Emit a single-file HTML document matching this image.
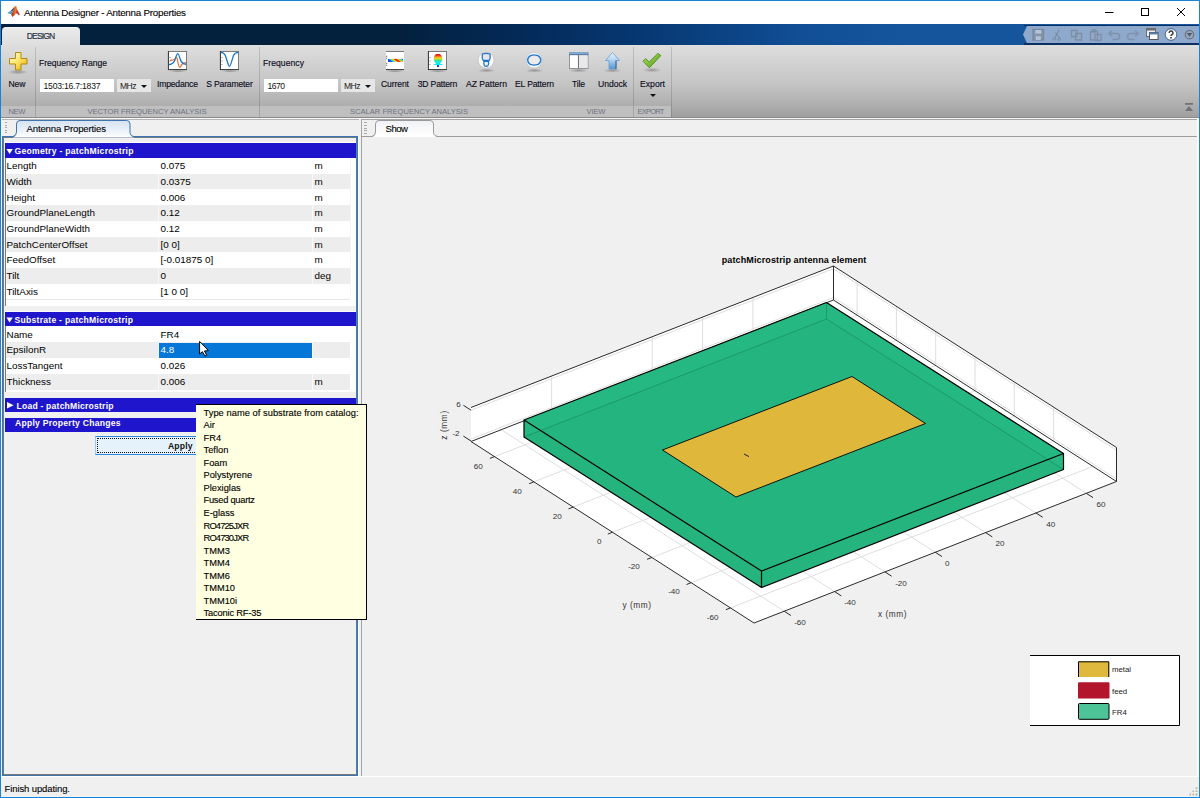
<!DOCTYPE html>
<html><head><meta charset="utf-8"><title>Antenna Designer - Antenna Properties</title>
<style>
html,body{margin:0;padding:0;}
body{width:1200px;height:798px;overflow:hidden;background:#f0f0f0;font-family:"Liberation Sans",sans-serif;position:relative;}
.a{position:absolute;box-sizing:border-box;}
.t{position:absolute;white-space:pre;line-height:14px;height:14px;font-family:"Liberation Sans",sans-serif;color:#000;z-index:5;}
#win{left:0;top:0;width:1200px;height:798px;border:1px solid #1883d7;z-index:40;pointer-events:none;}
#title{left:1px;top:1px;width:1198px;height:23px;background:#fff;}
#tabs{left:1px;top:24px;width:1198px;height:21px;background:linear-gradient(90deg,#03203c 0,#03203c 390px,#042a58 520px,#06356e 620px,#0b4384 720px,#114e94 800px,#15559c 900px,#16569c 1198px);}
#dtab{left:2px;top:27px;width:78px;height:19px;border-radius:4px 4px 0 0;background:linear-gradient(#ebebeb,#dddddd);border-top:1px solid #f6f6f6;}
#strip{left:1px;top:45px;width:1198px;height:72px;background:linear-gradient(#dedede 0,#d2d2d2 25%,#c4c4c4 55%,#adadad 85%,#9f9f9f 100%);}
#band{left:1px;top:105.500px;width:670px;height:11.500px;background:#bfbfbf;}
#stripb{left:1px;top:117px;width:1198px;height:1px;background:#8a8a8a;}
.sep{width:1px;top:47px;height:70px;background:rgba(0,0,0,.14);}
.inp{background:#fff;height:12.7px;top:79.3px;}
.cmb{background:#e6e6e6;height:12.7px;top:79.3px;}
.arr{width:0;height:0;border-left:3px solid transparent;border-right:3px solid transparent;border-top:3.5px solid #111;}
#qat{left:1023px;top:26px;width:176px;height:17px;background:#8ea9cb;clip-path:polygon(4px 0,100% 0,100% 100%,4px 100%,0 50%);}
#docL,#docR{top:118px;height:19px;background:#f0f0f0;}
#lp{left:2px;top:136px;width:356px;height:640px;border:1px solid #3f74ad;background:#f0f0f0;}
#lpi{left:3px;top:137px;width:354px;height:638px;border:1px solid #6f7b88;border-right-color:#587ba6;border-bottom-color:#787878;}
.hdr{left:5px;width:351px;background:#1f15cd;}
.row{left:6px;width:344px;height:15.7px;}
.g{background:#ededed;}
.w{background:#fff;}
#tip{left:196px;top:404px;width:171px;height:216px;background:#ffffe1;border:1px solid #000;border-left:0;z-index:30;}
</style></head>
<body>
<div class="a" id="title"></div>
<div class="a" id="tabs"></div>
<div class="a" id="strip"></div>
<div class="a" id="band"></div>
<div class="a" id="stripb"></div>
<div class="a" id="dtab"></div>
<div class="a" id="qat"></div>
<div class="a" style="left:1024px;top:24.5px;width:175px;height:1.5px;background:#0b2e63"></div><div class="a" style="left:1024px;top:43px;width:175px;height:1.6px;background:#0b2e63"></div>
<!-- separators -->
<div class="a sep" style="left:35px"></div><div class="a sep" style="left:259px"></div><div class="a sep" style="left:633px"></div><div class="a sep" style="left:671px"></div>
<!-- inputs -->
<div class="a inp" style="left:40px;width:74px"></div><div class="a cmb" style="left:117px;width:34px"></div><div class="a arr" style="left:141px;top:84.5px"></div>
<div class="a inp" style="left:264px;width:74px"></div><div class="a cmb" style="left:341px;width:34px"></div><div class="a arr" style="left:365px;top:84.5px"></div>
<div class="a arr" style="left:649.5px;top:94px"></div>
<!-- window controls + chrome icons -->
<svg class="a" style="left:0;top:0;z-index:6" width="1200" height="140" viewBox="0 0 1200 140">
 <defs>
  <linearGradient id="gy" x1="0" y1="0" x2="1" y2="1"><stop offset="0" stop-color="#fffbe0"/><stop offset=".45" stop-color="#ffe770"/><stop offset="1" stop-color="#e8a800"/></linearGradient>
  <linearGradient id="rb" x1="0" x2="1" y1=".3" y2="0"><stop offset="0" stop-color="#0a3cff"/><stop offset=".1" stop-color="#0a5cff"/><stop offset=".17" stop-color="#1fe0f0"/><stop offset=".27" stop-color="#8be03a"/><stop offset=".36" stop-color="#ffd21e"/><stop offset=".45" stop-color="#f0200a"/><stop offset=".56" stop-color="#e8200a"/><stop offset=".66" stop-color="#ffc81e"/><stop offset=".75" stop-color="#8be03a"/><stop offset=".84" stop-color="#1fe0f0"/><stop offset=".91" stop-color="#0a5cff"/><stop offset="1" stop-color="#0a3cff"/></linearGradient>
  <linearGradient id="rv" x1="0" y1="0" x2="0" y2="1"><stop offset="0" stop-color="#e01008"/><stop offset=".1" stop-color="#f03010"/><stop offset=".24" stop-color="#ffa01e"/><stop offset=".36" stop-color="#d8e030"/><stop offset=".48" stop-color="#4ee070"/><stop offset=".6" stop-color="#10f0e8"/><stop offset=".82" stop-color="#10e8f8"/><stop offset=".86" stop-color="#1050ff"/><stop offset="1" stop-color="#0a30ff"/></linearGradient>
  <linearGradient id="ub" x1="0" y1="0" x2="0" y2="1"><stop offset="0" stop-color="#eef6fd"/><stop offset=".45" stop-color="#b4d4ef"/><stop offset="1" stop-color="#5395d2"/></linearGradient>
  <linearGradient id="gr" x1="0" y1="0" x2="1" y2="1"><stop offset="0" stop-color="#b5e45a"/><stop offset="1" stop-color="#4e9a1a"/></linearGradient>
  <linearGradient id="ml" x1="0" y1="0" x2="1" y2="0"><stop offset="0" stop-color="#2a5e9a"/><stop offset=".45" stop-color="#5a4a6a"/><stop offset=".6" stop-color="#d8481e"/><stop offset="1" stop-color="#f0a040"/></linearGradient>
  <linearGradient id="ml2" x1="0" y1="0" x2="1" y2="0"><stop offset="0" stop-color="#9a2418"/><stop offset=".55" stop-color="#e2641e"/><stop offset="1" stop-color="#f5a030"/></linearGradient><radialGradient id="sh"><stop offset="0" stop-color="#000" stop-opacity=".28"/><stop offset="1" stop-color="#000" stop-opacity="0"/></radialGradient>
 </defs>
 <!-- matlab logo -->
 <path d="M7.3 12.9L10.8 10.8L12.9 11.6L11.2 14.3L9 13.7Z" fill="#4f9bd8"/><path d="M10.8 10.800L14.800 6.300L13.600 10L12.900 11.600Z" fill="#3f4f82"/><path d="M11.200 14.300L12.900 11.600L14.800 6.200Q15.800 5.500 16.600 6.400L17.300 10.600L14.600 15.300L12.300 17.100Z" fill="url(#ml2)"/><path d="M16.900 9L19.900 14.800L18.700 15.300L16.900 13.300L15.500 14.100Z" fill="#c23a2c"/>
 <!-- min/max/close -->
 <path d="M1105 12.5H1113.5" stroke="#000" stroke-width="1"/>
 <rect x="1141.5" y="8.5" width="7" height="7" fill="none" stroke="#000"/>
 <path d="M1177 8L1185 16M1185 8L1177 16" stroke="#000" stroke-width="1"/>
 <!-- quick access icons (muted) -->
 <g fill="none" stroke="#7d8fa8" stroke-width="1.3">
  <rect x="1033" y="29.5" width="10.5" height="10.5" fill="#8494a9" stroke="#7787a0"/><rect x="1035.3" y="30" width="6" height="3.600" fill="#b4c3d8" stroke="none"/><rect x="1035.800" y="36.200" width="5" height="3.800" fill="#aebfd6" stroke="none"/>
  <path d="M1059.3 29.5L1055 37.5M1055.3 32.5L1059.5 37.8M1054.3 37.600a1.300 1.300 0 1 0 .1 0M1059.200 38a1.200 1.200 0 1 0 .1 0" stroke="#74869f" stroke-width="1"/>
  <path d="M1071.5 30.5h5.5v6h-5.5zM1075.5 33.5h6v6.5h-6z" fill="#93a9c8"/>
  <path d="M1090.5 31.5h7v8.500h-7zM1092.500 30h3v2h-3zM1095 34.500h6v6h-6z" fill="#93a9c8"/>
  <path d="M1109 33.500h7.500a3 3 0 0 1 0 6h-4M1111.800 30.800l-3 2.700l3 2.700" stroke="#8093ad" stroke-width="1.6"/>
  <path d="M1138 33.500h-7.500a3 3 0 0 0 0 6h4M1135.200 30.800l3 2.700l-3 2.700" stroke="#8093ad" stroke-width="1.6"/>
 </g>
 <rect x="1146.500" y="28.500" width="9" height="8" fill="#e8edf3" stroke="#6d6d6d"/><rect x="1146.500" y="28.500" width="9" height="2" fill="#6d6d6d"/>
 <rect x="1149.500" y="32.500" width="8.500" height="7" fill="#fff" stroke="#555"/><rect x="1149.500" y="32.500" width="8.500" height="2" fill="#5b83b5"/>
 <circle cx="1171" cy="34.500" r="5.800" fill="#fbfcfd" stroke="#41618d" stroke-width="1"/>
 <path d="M1169.200 33a1.900 1.900 0 1 1 2.600 1.700q-.8.400-.8 1.400" fill="none" stroke="#3c3c3c" stroke-width="1.500"/><rect x="1170.200" y="37" width="1.600" height="1.500" fill="#3c3c3c"/>
 <circle cx="1189.500" cy="34.700" r="4.200" fill="#93a6c0" stroke="#6a6e74" stroke-width="1.100"/><path d="M1186.800 33h5.400l-2.700 3.800z" fill="#55585e"/>
 <!-- collapse -->
 <path d="M1185 103h8v1.800h-8zM1189 106l4 5h-8z" fill="#6f7376"/>
 <!-- NEW plus -->
 <ellipse cx="18" cy="72" rx="10" ry="2.600" fill="url(#sh)"/>
 <path d="M15.500 52.500h5.500v6h6v5.500h-6v6h-5.500v-6h-6v-5.500h6z" fill="url(#gy)" stroke="#b38a12" stroke-width="1" stroke-linejoin="round"/>
 <ellipse cx="178" cy="71.2" rx="9" ry="1.5" fill="url(#sh)"/><ellipse cx="230" cy="71.2" rx="9" ry="1.5" fill="url(#sh)"/><ellipse cx="395" cy="71.2" rx="9" ry="1.5" fill="url(#sh)"/><ellipse cx="438" cy="71.2" rx="9" ry="1.5" fill="url(#sh)"/>
 <!-- Impedance -->
 <rect x="168.500" y="51.500" width="18" height="18" fill="#fff" stroke="#707070" stroke-width=".9"/><path d="M168 69.600h19M168.400 51v19" stroke="#3a3a3a" stroke-width="1"/>
 <path d="M169.500 57.500h1M169.500 61h1M169.500 64.500h1" stroke="#666" stroke-width=".8"/>
 <path d="M170 60.400C172.500 60.400 174.500 59.800 175.600 58.200C176.600 57 177 57.500 177.400 59.500C178.200 64 178.800 67.400 179.800 67.400C180.800 67.400 181 65 182.300 64C183.500 63 185 62.700 186.300 62.600" fill="none" stroke="#e2632b" stroke-width="1.100"/>
 <path d="M169 64.600C172 64.300 174 63 175.300 59C176.300 55.500 177 53.600 177.700 53.600C178.600 53.600 179.300 56 180.300 59.500C181.300 62.800 183 64 186.300 64.400" fill="none" stroke="#1b78c8" stroke-width="1.300"/>
 <!-- S parameter -->
 <rect x="220.500" y="51.500" width="18" height="18" fill="#fff" stroke="#707070" stroke-width=".9"/><path d="M220 69.600h19M220.400 51v19" stroke="#3a3a3a" stroke-width="1"/>
 <path d="M221.500 57.500h1M221.500 61h1M221.500 64.500h1" stroke="#666" stroke-width=".8"/>
 <path d="M220.800 52.400C223 52.500 224.300 53.300 225.300 55.500C227 59.500 228.300 66.400 229.500 66.400C230.700 66.400 232 59.500 233.500 55.500C234.500 53.300 236 52.500 238.500 52.400" fill="none" stroke="#1b78c8" stroke-width="1.300"/>
 <!-- Current -->
 <rect x="386" y="51" width="18" height="19" fill="#fff"/><path d="M386 51.500h18" stroke="#7a7a7a" stroke-width="1"/><path d="M386 69.600h18" stroke="#333" stroke-width="1"/>
 <path d="M386 56.300h1.200M386 58.300h1.200M386 63.300h1.200M386 65.300h1.200" stroke="#444" stroke-width=".8"/>
 <rect x="388" y="58.900" width="15" height="3" fill="url(#rb)"/>
 <!-- 3D pattern -->
 <rect x="428.500" y="51.500" width="18" height="18" fill="#fff" stroke="#707070" stroke-width=".9"/><path d="M428 69.600h19M428.400 51v19" stroke="#3a3a3a" stroke-width="1"/>
 <path d="M429.500 57.500h1M429.500 61h1M429.500 64.500h1" stroke="#666" stroke-width=".8"/>
 <path d="M436 54h4q2.200 1.400 2.200 4.800q0 3-2 4.800v.4h2v1.100h-3.200v1.900h-2v-1.900h-3.200v-1.100h2v-.4q-2-1.800-2-4.800q0-3.400 2.200-4.800z" fill="url(#rv)"/>
 <!-- AZ -->
 <ellipse cx="486.500" cy="70.500" rx="9" ry="2.200" fill="url(#sh)"/>
 <circle cx="486.100" cy="60.200" r="7.900" fill="#fefefe" stroke="#bcbcbc" stroke-width=".7"/>
 <path d="M478.3 60.2h15.6M486.1 52.400v15.600" stroke="#ece6e6" stroke-width=".7"/>
 <path d="M482.400 54q3.800-1.200 7.600 0q.8 4-.8 6.500h-6q-1.600-2.500-.8-6.500z" fill="#e6e6e6" stroke="#1f76cc" stroke-width="1.300" stroke-linejoin="round"/><path d="M484 61.400h4.400q.6 2.800-.5 4.400q-1.700.9-3.400 0q-1.100-1.600-.5-4.400z" fill="#f2f2f2" stroke="#1f76cc" stroke-width="1.300" stroke-linejoin="round"/>
 <!-- EL -->
 <ellipse cx="534.500" cy="70.500" rx="9" ry="2.200" fill="url(#sh)"/>
 <circle cx="534.100" cy="60.200" r="7.900" fill="#fefefe" stroke="#bcbcbc" stroke-width=".7"/>
 <path d="M526.3 60.2h15.6M534.1 52.400v15.600" stroke="#ece6e6" stroke-width=".7"/>
 <path d="M527.600 60q.4-3.400 3.600-4.600q3-1 6 0q3.200 1.200 3.600 4.600q-.2 2.800-2.600 4.400q-4 1.400-8 0q-2.400-1.600-2.600-4.400z" fill="#ececec" stroke="#1f76cc" stroke-width="1.400"/>
 <!-- Tile -->
 <ellipse cx="578.500" cy="70.500" rx="10" ry="2" fill="url(#sh)"/>
 <rect x="569.500" y="52.500" width="18.500" height="16" fill="#f4f4f4" stroke="#8a8d92" stroke-width=".9"/>
 <rect x="569.200" y="52.200" width="19" height="2.600" fill="#7fa9d3"/><path d="M569.200 54.800h19" stroke="#2f4f78" stroke-width=".8"/>
 <path d="M578.500 55.200v13.300" stroke="#6d7278" stroke-width="1.300"/>
 <rect x="570" y="55.500" width="7.800" height="12.500" fill="#fdfdfd"/><rect x="579.200" y="55.500" width="8.300" height="12.500" fill="#e9e9e9"/>
 <!-- Undock -->
 <ellipse cx="612.500" cy="70.500" rx="9" ry="2.200" fill="url(#sh)"/>
 <path d="M612.500 52.500l7 8h-3.500v8.500h-7v-8.500h-3.500z" fill="url(#ub)" stroke="#6a9cd0" stroke-width=".8" stroke-linejoin="round"/>
 <path d="M616 60.500v8.500" stroke="#2d5f95" stroke-width="1"/>
 <!-- Export -->
 <ellipse cx="652" cy="70" rx="9.500" ry="2.400" fill="url(#sh)"/>
 <path d="M643 61.200l2.600-2.600l3.600 3.400l8.800-8.600l2.800 2.200l-11.400 12.200z" fill="url(#gr)" stroke="#4a8f1c" stroke-width=".9" stroke-linejoin="round"/>
</svg>
<!-- doc tab bars -->
<div class="a" style="left:2px;top:119px;width:357px;height:1px;background:#b5b5b5"></div>
<div class="a" style="left:361px;top:119px;width:836px;height:1px;background:#a5a5a5"></div>
<div class="a" style="left:361px;top:119px;width:1px;height:658px;background:#a5a5a5"></div>
<div class="a" style="left:361px;top:136px;width:836px;height:1px;background:#9c9c9c"></div>
<div class="a" style="left:1197px;top:118px;width:2px;height:659px;background:#fff"></div>
<div class="a" style="left:1px;top:118px;width:1198px;height:1px;background:#f7f7f7"></div>
<!-- grips -->
<div class="a" style="left:5px;top:122px;width:2px;height:12px;background:repeating-linear-gradient(#a8a8a8 0 1px,transparent 1px 2.600px)"></div>
<div class="a" style="left:364px;top:122px;width:3px;height:12px;background:repeating-linear-gradient(#a8a8a8 0 1px,transparent 1px 2.800px)"></div>
<!-- left panel -->
<div class="a" id="lp"></div><div class="a" id="lpi"></div>
<div class="a" style="left:358px;top:137px;width:1px;height:639px;background:#fbfbfb"></div><div class="a" style="left:5px;top:142px;width:351px;height:1px;background:#fdfdf8"></div>
<!-- Antenna Properties tab -->
<svg class="a" style="left:0;top:110px;z-index:3" width="460" height="30" viewBox="0 110 460 30"><defs><linearGradient id="tb" x1="0" y1="0" x2="0" y2="1"><stop offset="0" stop-color="#d6e3f1"/><stop offset=".55" stop-color="#e9f0f8"/><stop offset="1" stop-color="#fff"/></linearGradient><linearGradient id="tg" x1="0" y1="0" x2="0" y2="1"><stop offset="0" stop-color="#f0f1f5"/><stop offset=".55" stop-color="#fafafb"/><stop offset="1" stop-color="#fff"/></linearGradient></defs>
<path d="M12.500 137.600q4-1.100 4-5.600v-8q0-3.500 3.500-3.500h106.500q3.500 0 3.500 3.500v8q0 4.500 4.500 5.600z" fill="url(#tb)"/><path d="M12.500 136.600q4-.5 4-4.600v-8q0-3.500 3.500-3.500h106.500q3.500 0 3.500 3.500v8q0 4.100 4.500 4.600" fill="none" stroke="#3f74ad" stroke-width="1"/>
<path d="M371.500 137q4-.5 4-5v-8q0-3.500 3.500-3.500h51q3.500 0 3.500 3.500v8q0 4.500 4.500 5z" fill="url(#tg)"/><path d="M371.500 136.500q4-.5 4-4.500v-8q0-3.500 3.500-3.500h51q3.500 0 3.500 3.500v8q0 4 4.500 4.500" fill="none" stroke="#9a9a9a" stroke-width="1"/></svg>
<!-- Show tab -->

<!-- geometry block -->
<div class="a w" style="left:5px;top:143px;width:351px;height:163px;border-left:1px solid #7a7a7a"></div>
<div class="a hdr" style="top:143px;height:14.700px"></div>
<div class="a row g" style="top:173.700px"></div><div class="a row g" style="top:205.100px"></div><div class="a row g" style="top:236.500px"></div><div class="a row g" style="top:267.900px"></div>
<div class="a" style="left:6px;top:299px;width:344px;height:1px;background:#e6e6e6"></div>
<div class="a" style="left:158px;top:158px;width:1px;height:141px;background:rgba(255,255,255,.6)"></div>
<div class="a" style="left:312px;top:158px;width:1px;height:141px;background:rgba(255,255,255,.7)"></div>
<div class="a" style="left:350px;top:158px;width:1px;height:141px;background:#f4f4f4"></div>
<!-- substrate block -->
<div class="a" style="left:5px;top:311px;width:351px;height:1px;background:#fafafa"></div>
<div class="a w" style="left:5px;top:326px;width:351px;height:66px;border-left:1px solid #7a7a7a"></div>
<div class="a hdr" style="top:312px;height:14.300px"></div>
<div class="a row g" style="top:342.200px"></div><div class="a row g" style="top:373.600px;height:16px"></div>
<div class="a" style="left:158px;top:326.500px;width:1px;height:63px;background:rgba(255,255,255,.6)"></div>
<div class="a" style="left:312px;top:326.500px;width:1px;height:63px;background:rgba(255,255,255,.7)"></div>
<div class="a" style="left:158.500px;top:342.800px;width:153.500px;height:15.100px;background:#0477d8"></div>
<!-- load / apply -->
<div class="a hdr" style="top:398px;height:14px"></div>
<div class="a hdr" style="top:418px;height:14px"></div>
<div class="a" style="left:95px;top:436px;width:170px;height:19px;background:#e5f1fb;border:1px solid #2a8ae0;border-left-color:#9cc8f0"></div>
<div class="a" style="left:97px;top:438px;width:166px;height:15px;border:1px dotted #111"></div>
<!-- header triangles + cursor -->
<svg class="a" style="left:0;top:0;z-index:32" width="400" height="460" viewBox="0 0 400 460">
 <path d="M6.400 149h6.400l-3.200 5z" fill="#fff"/><path d="M6.400 317.500h6.400l-3.200 5z" fill="#fff"/><path d="M7 402l6.600 3.200l-6.600 3.200z" fill="#fff"/>
 <path d="M199.6 341.4V354L202.4 351.7L204.9 356L206.7 355.2L204.5 351L208.5 350.6Z" fill="#fff" stroke="#000" stroke-width="1" stroke-linejoin="round"/>
</svg>
<div class="a" id="tip"></div>
<!-- status bar -->
<div class="a" style="left:1px;top:776px;width:1196px;height:1px;background:#fff"></div>
<svg class="a" style="left:1188px;top:785px;z-index:6" width="11" height="12"><g fill="#b9b4a4"><rect x="7.500" y="2.500" width="2" height="1.500"/><rect x="4.500" y="5.500" width="1.500" height="1.500"/><rect x="7.500" y="5.500" width="2" height="1.500"/><rect x="1.500" y="8.500" width="1.500" height="2"/><rect x="4.500" y="8.500" width="1.500" height="2"/><rect x="7.500" y="8.500" width="2" height="2"/></g></svg>
<!-- plot -->
<svg class="a" style="left:0;top:0;z-index:4" width="1200" height="798" viewBox="0 0 1200 798" shape-rendering="geometricPrecision">
<polygon points="754.0,623.0 1116.5,481.5 833.5,300.0 471.0,441.5" fill="#fff"/>
<polygon points="471.0,441.5 833.5,300.0 833.5,266.0 471.0,407.5" fill="#fff"/>
<polygon points="833.5,300.0 1116.5,481.5 1116.5,447.5 833.5,266.0" fill="#fff"/>
<path d="M784.2 611.2L501.2 429.7M730.4 607.9L1092.9 466.4M834.6 591.6L551.6 410.1M691.1 582.7L1053.6 441.2M551.6 410.1L551.6 376.1M1053.6 441.2L1053.6 407.2M884.9 571.9L601.9 390.4M651.8 557.5L1014.3 416.0M1014.3 416.0L1014.3 382.0M935.2 552.2L652.2 370.8M612.5 532.2L975.0 390.8M652.2 370.8L652.2 336.8M975.0 390.8L975.0 356.8M985.6 532.6L702.6 351.1M573.2 507.0L935.7 365.5M702.6 351.1L702.6 317.1M935.7 365.5L935.7 331.5M1035.9 512.9L752.9 331.4M533.9 481.8L896.4 340.3M752.9 331.4L752.9 297.4M896.4 340.3L896.4 306.3M1086.3 493.3L803.3 311.8M494.6 456.6L857.1 315.1M857.1 315.1L857.1 281.1M471.0 439.0L833.5 297.5L1116.5 479.0M471.0 410.2L833.5 268.7L1116.5 450.2" stroke="#dedede" stroke-width="1" fill="none"/>
<path d="M471.0 407.5L833.5 266.0M833.5 266.0L1116.5 447.5M833.5 266.0L833.5 300.0M1116.5 447.5L1116.5 481.5M471.0 441.5L833.5 300.0M833.5 300.0L1116.5 481.5M471.0 441.5L754.0 623.0M754.0 623.0L1116.5 481.5M784.2 611.2L790.9 615.5M730.4 607.9L725.8 609.7M834.6 591.6L841.3 595.9M691.1 582.7L686.5 584.5M884.9 571.9L891.6 576.2M651.8 557.5L647.1 559.3M935.2 552.2L942.0 556.6M612.5 532.2L607.8 534.1M985.6 532.6L992.3 536.9M573.2 507.0L568.5 508.9M1035.9 512.9L1042.7 517.3M533.9 481.8L529.2 483.7M1086.3 493.3L1093.0 497.6M494.6 456.6L489.9 458.4M471.0 441.0L463.4 436.1M471.0 410.2L463.4 405.3" stroke="#2a2a2a" stroke-width="1" fill="none"/>
<polygon points="524.0,420.0 826.5,302.5 1063.5,453.5 1063.5,469.5 761.5,587.5 524.0,437.0" fill="#25b37e"/>
<polygon points="524.0,420.0 826.5,302.5 1063.5,453.5 761.5,571.0" fill="#24b47f"/>
<polygon points="524.0,420.0 826.5,302.5 1063.5,453.5 1063.5,469.5 826.5,319.0 524.0,437.0" fill="#25b882"/>
<path d="M524 437L826.5 319L1063.5 469.5M826.5 302.5L826.5 319" stroke="#1c9568" stroke-width="0.9" fill="none"/>
<path d="M524 420L826.5 302.5L1063.5 453.5L761.5 571ZM524 420L524 437L761.5 587.5L1063.5 469.5L1063.5 453.5M761.5 571L761.5 587.5" stroke="#000" stroke-width="1.2" fill="none" stroke-linejoin="round"/>
<polygon points="662.5,450.0 852.0,376.5 925.5,423.5 736.0,497.0" fill="#dfb83b" stroke="#000" stroke-width="0.9" stroke-linejoin="round"/>
<path d="M744 454L749 456.6" stroke="#222" stroke-width="1"/>
<rect x="1030" y="655" width="150" height="71" fill="#fff"/><path d="M1030 655.5H1179.5V725.5H1030" stroke="#000" fill="none"/>
<rect x="1078" y="661.5" width="31" height="15.5" fill="#dfb83e"/><path d="M1078.5 677V661.8H1108.8V677" stroke="#000" fill="none"/>
<rect x="1078" y="682.2" width="31.5" height="16.4" rx="1.2" fill="#b3152d"/>
<rect x="1078.5" y="703.5" width="30.5" height="15.8" rx="1" fill="#4cc497" stroke="#000"/>
</svg>
<span class="t" style="left:24.00px;top:5.50px;font-size:9.8px;letter-spacing:-0.235px;-webkit-text-stroke:.1px #000;">Antenna Designer - Antenna Properties</span>
<span class="t" style="left:26.75px;top:28.80px;font-size:8.6px;letter-spacing:-0.891px;color:#2c3748;-webkit-text-stroke:.2px #2c3748;">DESIGN</span>
<span class="t" style="left:39.00px;top:55.50px;font-size:8.6px;letter-spacing:-0.023px;color:#0c0c20;-webkit-text-stroke:.14px #0c0c20;">Frequency Range</span>
<span class="t" style="left:263.00px;top:55.50px;font-size:8.6px;letter-spacing:0.049px;color:#0c0c20;-webkit-text-stroke:.14px #0c0c20;">Frequency</span>
<span class="t" style="left:8.50px;top:77.10px;font-size:8.6px;letter-spacing:-0.102px;color:#0c0c20;-webkit-text-stroke:.14px #0c0c20;">New</span>
<span class="t" style="left:157.00px;top:77.10px;font-size:8.6px;letter-spacing:-0.191px;color:#0c0c20;-webkit-text-stroke:.14px #0c0c20;">Impedance</span>
<span class="t" style="left:206.25px;top:77.10px;font-size:8.6px;letter-spacing:-0.175px;color:#0c0c20;-webkit-text-stroke:.14px #0c0c20;">S Parameter</span>
<span class="t" style="left:381.00px;top:77.10px;font-size:8.6px;letter-spacing:-0.109px;color:#0c0c20;-webkit-text-stroke:.14px #0c0c20;">Current</span>
<span class="t" style="left:417.75px;top:77.10px;font-size:8.6px;letter-spacing:-0.177px;color:#0c0c20;-webkit-text-stroke:.14px #0c0c20;">3D Pattern</span>
<span class="t" style="left:466.00px;top:77.10px;font-size:8.6px;letter-spacing:-0.009px;color:#0c0c20;-webkit-text-stroke:.14px #0c0c20;">AZ Pattern</span>
<span class="t" style="left:515.00px;top:77.10px;font-size:8.6px;letter-spacing:-0.144px;color:#0c0c20;-webkit-text-stroke:.14px #0c0c20;">EL Pattern</span>
<span class="t" style="left:572.00px;top:77.10px;font-size:8.6px;letter-spacing:-0.177px;color:#0c0c20;-webkit-text-stroke:.14px #0c0c20;">Tile</span>
<span class="t" style="left:598.00px;top:77.10px;font-size:8.6px;letter-spacing:-0.028px;color:#0c0c20;-webkit-text-stroke:.14px #0c0c20;">Undock</span>
<span class="t" style="left:640.00px;top:77.10px;font-size:8.6px;letter-spacing:0.031px;color:#0c0c20;-webkit-text-stroke:.14px #0c0c20;">Export</span>
<span class="t" style="left:43.50px;top:79.00px;font-size:8.6px;letter-spacing:-0.212px;color:#111;">1503:16.7:1837</span>
<span class="t" style="left:120.00px;top:79.00px;font-size:8.6px;letter-spacing:-0.586px;color:#222;">MHz</span>
<span class="t" style="left:267.50px;top:79.00px;font-size:8.6px;letter-spacing:-0.542px;color:#111;">1670</span>
<span class="t" style="left:344.00px;top:79.00px;font-size:8.6px;letter-spacing:-0.586px;color:#222;">MHz</span>
<span class="t" style="left:8.50px;top:104.50px;font-size:7.6px;letter-spacing:-0.359px;color:#6d7182;">NEW</span>
<span class="t" style="left:87.50px;top:104.50px;font-size:7.6px;letter-spacing:-0.018px;color:#6d7182;">VECTOR FREQUENCY ANALYSIS</span>
<span class="t" style="left:350.00px;top:104.50px;font-size:7.6px;letter-spacing:-0.013px;color:#6d7182;">SCALAR FREQUENCY ANALYSIS</span>
<span class="t" style="left:586.50px;top:104.50px;font-size:7.6px;letter-spacing:-0.141px;color:#6d7182;">VIEW</span>
<span class="t" style="left:637.50px;top:104.50px;font-size:7.6px;letter-spacing:-0.819px;color:#6d7182;">EXPORT</span>
<span class="t" style="left:26.50px;top:121.50px;font-size:9.6px;letter-spacing:-0.155px;-webkit-text-stroke:.1px #000;">Antenna Properties</span>
<span class="t" style="left:385.50px;top:121.50px;font-size:9.6px;letter-spacing:-0.500px;-webkit-text-stroke:.1px #000;">Show</span>
<span class="t" style="left:4.50px;top:781.80px;font-size:9.5px;letter-spacing:-0.105px;-webkit-text-stroke:.1px #000;">Finish updating.</span>
<span class="t" style="left:6.50px;top:159.20px;font-size:9.9px;">Length</span>
<span class="t" style="left:160.50px;top:159.20px;font-size:9.9px;">0.075</span>
<span class="t" style="left:314.50px;top:159.20px;font-size:9.9px;">m</span>
<span class="t" style="left:6.50px;top:174.90px;font-size:9.9px;">Width</span>
<span class="t" style="left:160.50px;top:174.90px;font-size:9.9px;">0.0375</span>
<span class="t" style="left:314.50px;top:174.90px;font-size:9.9px;">m</span>
<span class="t" style="left:6.50px;top:190.60px;font-size:9.9px;">Height</span>
<span class="t" style="left:160.50px;top:190.60px;font-size:9.9px;">0.006</span>
<span class="t" style="left:314.50px;top:190.60px;font-size:9.9px;">m</span>
<span class="t" style="left:6.50px;top:206.30px;font-size:9.9px;">GroundPlaneLength</span>
<span class="t" style="left:160.50px;top:206.30px;font-size:9.9px;">0.12</span>
<span class="t" style="left:314.50px;top:206.30px;font-size:9.9px;">m</span>
<span class="t" style="left:6.50px;top:222.00px;font-size:9.9px;">GroundPlaneWidth</span>
<span class="t" style="left:160.50px;top:222.00px;font-size:9.9px;">0.12</span>
<span class="t" style="left:314.50px;top:222.00px;font-size:9.9px;">m</span>
<span class="t" style="left:6.50px;top:237.70px;font-size:9.9px;">PatchCenterOffset</span>
<span class="t" style="left:160.50px;top:237.70px;font-size:9.9px;">[0 0]</span>
<span class="t" style="left:314.50px;top:237.70px;font-size:9.9px;">m</span>
<span class="t" style="left:6.50px;top:253.40px;font-size:9.9px;">FeedOffset</span>
<span class="t" style="left:160.50px;top:253.40px;font-size:9.9px;">[-0.01875 0]</span>
<span class="t" style="left:314.50px;top:253.40px;font-size:9.9px;">m</span>
<span class="t" style="left:6.50px;top:269.10px;font-size:9.9px;">Tilt</span>
<span class="t" style="left:160.50px;top:269.10px;font-size:9.9px;">0</span>
<span class="t" style="left:314.50px;top:269.10px;font-size:9.9px;">deg</span>
<span class="t" style="left:6.50px;top:284.80px;font-size:9.9px;">TiltAxis</span>
<span class="t" style="left:160.50px;top:284.80px;font-size:9.9px;">[1 0 0]</span>
<span class="t" style="left:6.50px;top:327.50px;font-size:9.9px;">Name</span>
<span class="t" style="left:160.50px;top:327.50px;font-size:9.9px;">FR4</span>
<span class="t" style="left:6.50px;top:343.20px;font-size:9.9px;">EpsilonR</span>
<span class="t" style="left:160.50px;top:343.20px;font-size:9.9px;color:#fff;">4.8</span>
<span class="t" style="left:6.50px;top:358.90px;font-size:9.9px;">LossTangent</span>
<span class="t" style="left:160.50px;top:358.90px;font-size:9.9px;">0.026</span>
<span class="t" style="left:6.50px;top:374.60px;font-size:9.9px;">Thickness</span>
<span class="t" style="left:160.50px;top:374.60px;font-size:9.9px;">0.006</span>
<span class="t" style="left:314.50px;top:374.60px;font-size:9.9px;">m</span>
<span class="t" style="left:14.50px;top:143.80px;font-size:8.6px;letter-spacing:0.271px;font-weight:700;color:#fff;">Geometry - patchMicrostrip</span>
<span class="t" style="left:14.50px;top:312.50px;font-size:8.6px;letter-spacing:0.260px;font-weight:700;color:#fff;">Substrate - patchMicrostrip</span>
<span class="t" style="left:16.50px;top:398.50px;font-size:8.6px;letter-spacing:0.208px;font-weight:700;color:#fff;">Load - patchMicrostrip</span>
<span class="t" style="left:15.00px;top:416.00px;font-size:8.6px;letter-spacing:0.249px;font-weight:700;color:#fff;">Apply Property Changes</span>
<span class="t" style="left:168.00px;top:439.00px;font-size:8.6px;letter-spacing:0.156px;font-weight:700;color:#111;">Apply</span>
<span class="t" style="left:203.50px;top:405.50px;font-size:9.3px;letter-spacing:0.043px;z-index:31;-webkit-text-stroke:.12px #000;">Type name of substrate from catalog:</span>
<span class="t" style="left:203.50px;top:418.06px;font-size:9.3px;z-index:31;-webkit-text-stroke:.12px #000;">Air</span>
<span class="t" style="left:203.50px;top:430.62px;font-size:9.3px;z-index:31;-webkit-text-stroke:.12px #000;">FR4</span>
<span class="t" style="left:203.50px;top:443.18px;font-size:9.3px;z-index:31;-webkit-text-stroke:.12px #000;">Teflon</span>
<span class="t" style="left:203.50px;top:455.74px;font-size:9.3px;z-index:31;-webkit-text-stroke:.12px #000;">Foam</span>
<span class="t" style="left:203.50px;top:468.30px;font-size:9.3px;z-index:31;-webkit-text-stroke:.12px #000;">Polystyrene</span>
<span class="t" style="left:203.50px;top:480.86px;font-size:9.3px;z-index:31;-webkit-text-stroke:.12px #000;">Plexiglas</span>
<span class="t" style="left:203.50px;top:493.42px;font-size:9.3px;letter-spacing:-0.251px;z-index:31;-webkit-text-stroke:.12px #000;">Fused quartz</span>
<span class="t" style="left:203.50px;top:505.98px;font-size:9.3px;z-index:31;-webkit-text-stroke:.12px #000;">E-glass</span>
<span class="t" style="left:203.50px;top:518.54px;font-size:9.3px;letter-spacing:-0.825px;z-index:31;-webkit-text-stroke:.12px #000;">RO4725JXR</span>
<span class="t" style="left:203.50px;top:531.10px;font-size:9.3px;letter-spacing:-0.825px;z-index:31;-webkit-text-stroke:.12px #000;">RO4730JXR</span>
<span class="t" style="left:203.50px;top:543.66px;font-size:9.3px;z-index:31;-webkit-text-stroke:.12px #000;">TMM3</span>
<span class="t" style="left:203.50px;top:556.22px;font-size:9.3px;z-index:31;-webkit-text-stroke:.12px #000;">TMM4</span>
<span class="t" style="left:203.50px;top:568.78px;font-size:9.3px;z-index:31;-webkit-text-stroke:.12px #000;">TMM6</span>
<span class="t" style="left:203.50px;top:581.34px;font-size:9.3px;z-index:31;-webkit-text-stroke:.12px #000;">TMM10</span>
<span class="t" style="left:203.50px;top:593.90px;font-size:9.3px;z-index:31;-webkit-text-stroke:.12px #000;">TMM10i</span>
<span class="t" style="left:203.50px;top:606.46px;font-size:9.3px;letter-spacing:-0.161px;z-index:31;-webkit-text-stroke:.12px #000;">Taconic RF-35</span>
<span class="t" style="left:721.75px;top:253.00px;font-size:9px;letter-spacing:0.116px;font-weight:700;">patchMicrostrip antenna element</span>
<span class="t" style="left:473.79px;top:459.70px;font-size:8.1px;color:#333;">60</span>
<span class="t" style="left:512.79px;top:484.70px;font-size:8.1px;color:#333;">40</span>
<span class="t" style="left:552.79px;top:509.70px;font-size:8.1px;color:#333;">20</span>
<span class="t" style="left:597.04px;top:534.70px;font-size:8.1px;color:#333;">0</span>
<span class="t" style="left:628.15px;top:559.70px;font-size:8.1px;color:#333;">-20</span>
<span class="t" style="left:668.15px;top:585.30px;font-size:8.1px;color:#333;">-40</span>
<span class="t" style="left:706.85px;top:610.70px;font-size:8.1px;color:#333;">-60</span>
<span class="t" style="left:794.15px;top:615.70px;font-size:8.1px;color:#333;">-60</span>
<span class="t" style="left:844.15px;top:596.30px;font-size:8.1px;color:#333;">-40</span>
<span class="t" style="left:895.15px;top:577.00px;font-size:8.1px;color:#333;">-20</span>
<span class="t" style="left:945.04px;top:557.00px;font-size:8.1px;color:#333;">0</span>
<span class="t" style="left:995.49px;top:537.00px;font-size:8.1px;color:#333;">20</span>
<span class="t" style="left:1046.19px;top:518.00px;font-size:8.1px;color:#333;">40</span>
<span class="t" style="left:1096.49px;top:498.00px;font-size:8.1px;color:#333;">60</span>
<span class="t" style="left:456.24px;top:398.00px;font-size:8.1px;color:#333;">6</span>
<span class="t" style="left:452.40px;top:427.30px;font-size:8.1px;color:#333;">-2</span>
<span class="t" style="left:429.10px;top:418.20px;font-size:8.3px;letter-spacing:0.637px;color:#333;transform:rotate(-90deg);">z (mm)</span>
<span class="t" style="left:622.45px;top:598.00px;font-size:8.3px;letter-spacing:0.537px;color:#333;">y (mm)</span>
<span class="t" style="left:878.05px;top:607.30px;font-size:8.3px;letter-spacing:0.537px;color:#333;">x (mm)</span>
<span class="t" style="left:1112.00px;top:662.50px;font-size:7.8px;color:#1a1a1a;">metal</span>
<span class="t" style="left:1112.00px;top:684.50px;font-size:7.8px;color:#1a1a1a;">feed</span>
<span class="t" style="left:1112.00px;top:705.50px;font-size:7.8px;color:#1a1a1a;">FR4</span>
<div class="a" id="win"></div>
</body></html>
